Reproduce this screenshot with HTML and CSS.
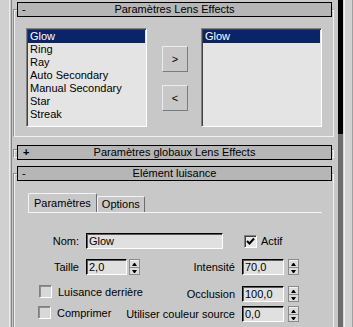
FILE: index.html
```html
<!DOCTYPE html>
<html lang="fr">
<head>
    <meta charset="UTF-8">
    <title>Lens Effects</title>
    <link rel="stylesheet" href="styles.css">
</head>
<body>
<div class="panel">
    <div class="gutter"></div>

    <div class="rollouts">
        <!-- Paramètres Lens Effects -->
        <div class="rollout first">
            <div class="rollout-head"><span class="sign">-</span><span>Paramètres Lens Effects</span><span></span></div>
            <div class="lens">
                <ul class="list">
                    <li class="sel">Glow</li>
                    <li>Ring</li>
                    <li>Ray</li>
                    <li>Auto Secondary</li>
                    <li>Manual Secondary</li>
                    <li>Star</li>
                    <li>Streak</li>
                </ul>
                <div class="arrows">
                    <button class="move">&gt;</button>
                    <button class="move">&lt;</button>
                </div>
                <ul class="list">
                    <li class="sel">Glow</li>
                </ul>
            </div>
        </div>

        <!-- Paramètres globaux -->
        <div class="rollout closed">
            <div class="rollout-head"><span class="sign plus">+</span><span>Paramètres globaux Lens Effects</span><span></span></div>
        </div>

        <!-- Elément luisance -->
        <div class="rollout last">
            <div class="rollout-head"><span class="sign">-</span><span>Elément luisance</span><span></span></div>
            <div class="tabs">
                <div class="tab active">Paramètres</div>
                <div class="tab">Options</div>
            </div>
            <div class="pane">
                <div class="row">
                    <span class="lbl">Nom:</span>
                    <input class="field wide" value="Glow">
                    <span class="check on"><svg width="9" height="9" viewBox="0 0 9 9"><path d="M1 4 L3.5 6.5 L8 1.5" fill="none" stroke="#000" stroke-width="2"/></svg></span>
                    <span class="ctext">Actif</span>
                </div>
                <div class="row r2">
                    <span class="lbl">Taille</span>
                    <input class="field num" value="2,0">
                    <span class="spin"><i class="up"></i><i class="down"></i></span>
                    <span class="rgroup">
                        <span class="rlabel">Intensité</span>
                        <input class="field num" value="70,0">
                        <span class="spin"><i class="up"></i><i class="down"></i></span>
                    </span>
                </div>
                <div class="row r3">
                    <span class="opt"><span class="check"></span><span class="ctext">Luisance derrière</span></span>
                    <span class="rgroup">
                        <span class="rlabel">Occlusion</span>
                        <input class="field num" value="100,0">
                        <span class="spin"><i class="up"></i><i class="down"></i></span>
                    </span>
                </div>
                <div class="row r4">
                    <span class="opt"><span class="check"></span><span class="ctext">Comprimer</span></span>
                    <span class="rgroup">
                        <span class="rlabel">Utiliser couleur source</span>
                        <input class="field num" value="0,0">
                        <span class="spin"><i class="up"></i><i class="down"></i></span>
                    </span>
                </div>
                <div class="row r5">
                    <span class="cut">Seuil:</span>
                </div>
            </div>
        </div>
    </div>

    <div class="scroll">
        <div class="thumb"></div>
        <div class="track"></div>
    </div>
</div>
</body>
</html>
```

FILE: styles.css
```css
body { margin: 0; background: #c8c8c8; font: 11px "Liberation Sans", Arial, sans-serif; color: #000; overflow: hidden; }
.panel { display: flex; width: 353px; height: 327px; overflow: hidden; }
.gutter { width: 12px; flex: none; background: linear-gradient(to right, #d0d0d0 0 9px, #ececec 9px 10px, #c8c8c8 10px 11px, #858585 11px 12px); }
.rollouts { width: 324px; flex: none; }

/* rollouts */
.rollout { margin: 12px 2px 0 1px; border: 1px solid #8c8c8c; border-right-color: #f0f0f0; border-bottom-color: #f0f0f0; box-shadow: inset 1px 1px 0 #f0f0f0; }
.rollout.first { margin-top: 9px; }
.rollout.last { margin-top: 15px; }
.rollout-head { margin: -8px 1px 0 3px; height: 13px; line-height: 13px; border: 1px solid #000; background: #b6b6b6; display: grid; grid-template-columns: 1fr auto 1fr; }
.closed .rollout-head { margin-top: -5px; margin-bottom: -3px; }
.sign { padding-left: 4px; }
.sign.plus { font-weight: bold; padding-left: 5px; }

/* listes */
.lens { display: flex; padding: 11px 11px 9px 12px; }
.list { list-style: none; margin: 0; padding: 1px 0 0; width: 121px; height: 99px; box-sizing: border-box; border: 1px solid; border-color: #808080 #fff #fff #808080; box-shadow: inset 1px 1px 0 #404040; background: #e4e4e4; }
.list li { height: 13px; line-height: 13px; margin: 0 1px 0 1px; padding-left: 2px; white-space: nowrap; }
.list li.sel { background: #0a246a; color: #fff; }
.arrows { display: flex; flex-direction: column; gap: 13px; padding-top: 18px; margin: 0 13px 0 15px; }
.move { width: 26px; height: 26px; padding: 0; font: inherit; color: #000; background: #c8c8c8; border: 1px solid; border-color: #ececec #7c7c7c #7c7c7c #ececec; }

/* onglets */
.tabs { display: flex; align-items: flex-end; margin: 12px 0 0 14px; }
.tab { padding: 0 4px; height: 15px; line-height: 15px; border: 1px solid; border-color: #f4f4f4 #6c6c6c transparent #f4f4f4; border-bottom: none; border-radius: 2px 2px 0 0; }
.tab.active { height: 18px; line-height: 18px; padding: 0 5px; }
.pane { margin: 0 11px 0 14px; border-top: 1px solid #f4f4f4; padding-top: 20px; }

/* champs */
.row { display: flex; align-items: center; height: 16px; padding-right: 23px; white-space: nowrap; }
.r2 { margin-top: 10px; }
.r3 { margin-top: 11px; }
.r4 { margin-top: 4px; }
.r5 { margin-top: 2px; }
.lbl { width: 51px; text-align: right; margin-right: 7px; }
.rgroup { margin-left: auto; display: flex; align-items: center; }
.rlabel { margin-right: 7px; }
.field { box-sizing: border-box; height: 16px; border: 1px solid; border-color: #000 #fff #fff #000; box-shadow: inset 1px 1px 0 #5a5a5a; background: #e0e0e0; font: inherit; color: #000; padding: 0 0 0 2px; outline: none; }
.wide { width: 137px; }
.num { width: 42px; }
.row > .num { width: 41px; }
.spin { display: flex; flex-direction: column; width: 11px; height: 16px; margin-left: 2px; box-sizing: border-box; border: 1px solid #8a8a8a; }
.rgroup .spin { margin-left: 4px; }
.spin i { flex: 1; display: flex; align-items: center; justify-content: center; background: #dcdcdc; border-top: 1px solid #f4f4f4; }
.spin i.down { border-top: 1px solid #8a8a8a; }
.spin i::before { content: ""; width: 1px; height: 0; border-left: 2px solid transparent; border-right: 2px solid transparent; }
.spin i.up::before { border-bottom: 3px solid #000; }
.spin i.down::before { border-top: 3px solid #000; }

.check { width: 13px; height: 13px; flex: none; box-sizing: border-box; border: 1px solid; border-color: #808080 #fff #fff #808080; box-shadow: inset 1px 1px 0 #8e8e8e; background: #d8d8d8; display: flex; align-items: center; justify-content: center; }
.check.on { margin-left: 21px; box-shadow: inset 1px 1px 0 #404040; background: #e8e8e8; }
.ctext { margin-left: 4px; }
.opt { display: flex; align-items: center; align-self: flex-start; margin-left: 11px; }
.opt .ctext { margin-left: 6px; }
.r3 .opt { margin-top: -1px; }
.r4 .opt { margin-left: 10px; }
.cut { margin-left: 21px; align-self: flex-end; }

/* barre de défilement */
.scroll { width: 17px; flex: none; display: flex; flex-direction: column; background: linear-gradient(to right, #c8c8c8 0 2px, transparent 2px 7px, #d8d8d8 7px 8px, #f2f2f2 8px 9px, #d2d2d2 9px 16px, #a0a0a0 16px); }
.thumb { margin-left: 2px; width: 5px; height: 134px; background: #000; }
.track { margin-left: 2px; width: 5px; flex: 1; background: #6c6c6c; }
```
